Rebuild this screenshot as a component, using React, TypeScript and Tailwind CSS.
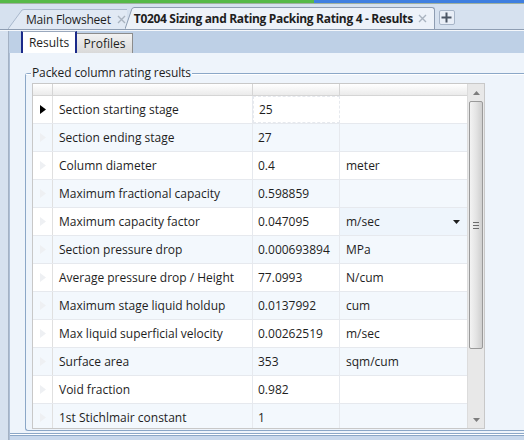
import React from "react";

const rows: [string, string, string, boolean?][] = [
  ["Section starting stage", "25", ""],
  ["Section ending stage", "27", ""],
  ["Column diameter", "0.4", "meter"],
  ["Maximum fractional capacity", "0.598859", ""],
  ["Maximum capacity factor", "0.047095", "m/sec", true],
  ["Section pressure drop", "0.000693894", "MPa"],
  ["Average pressure drop / Height", "77.0993", "N/cum"],
  ["Maximum stage liquid holdup", "0.0137992", "cum"],
  ["Max liquid superficial velocity", "0.00262519", "m/sec"],
  ["Surface area", "353", "sqm/cum"],
  ["Void fraction", "0.982", ""],
  ["1st Stichlmair constant", "1", ""],
];

function CloseX() {
  return (
    <svg width="9" height="9" viewBox="0 0 9 9" className="shrink-0">
      <path d="M1 1 L8 8 M8 1 L1 8" stroke="#a9b3bf" strokeWidth="1.4" />
    </svg>
  );
}

export default function App() {
  return (
    <div
      className="w-[524px] h-[440px] overflow-hidden bg-[#d6e1ef] relative text-[12px] text-[#1e1e1e] flex flex-col"
      style={{ fontFamily: "'Open Sans', 'Noto Sans', sans-serif" }}
    >
      {/* top color bar */}
      <div className="flex h-[3px] shrink-0">
        <div className="w-[314px] bg-[#56b948]" />
        <div className="flex-1 bg-[#3f7fe0]" />
      </div>
      <div className="h-[1px] bg-[#9fb0a0] shrink-0" />
      {/* document tabs */}
      <div className="h-[25px] flex items-end shrink-0 pl-[8px] relative">
        <div className="flex items-end h-[20px]">
          <svg width="16" height="20" viewBox="0 0 16 20" className="shrink-0">
            <path d="M0 20 L14 1 L16 0.5 L16 20 Z" fill="#e1e9f4" />
            <path d="M0 20 L14 1 L16 0.5" stroke="#a9b8cc" fill="none" />
          </svg>
          <div className="h-[20px] bg-[#e1e9f4] border-t border-[#a9b8cc] flex items-center gap-[6px] pl-[2px] pr-[1px] text-[#1e1e1e] tracking-[-0.2px]">
            <span className="leading-none">Main Flowsheet</span>
            <CloseX />
          </div>
        </div>
        <div className="flex items-end h-[22px] -ml-[2px] relative">
          <svg width="9" height="22" viewBox="0 0 9 22" className="shrink-0">
            <path d="M0 22 L7 1.5 L9 0.5 L9 22 Z" fill="#edf2f9" />
            <path d="M0 22 L7 1.5 L9 0.5" stroke="#8e9db2" fill="none" />
          </svg>
          <div className="h-[22px] bg-[#edf2f9] border-t border-r border-[#8e9db2] rounded-tr-[3px] flex items-center gap-[5px] pl-[0px] pr-[7px]">
            <span className="font-bold leading-none tracking-[-0.32px]">
              T0204 Sizing and Rating Packing Rating 4 - Results
            </span>
            <CloseX />
          </div>
        </div>
        <div className="ml-[4px] mb-[4px] w-[16px] h-[15px] border border-[#a7b5c8] rounded-[2px] bg-[#e8eef7] flex items-center justify-center">
          <svg width="11" height="11" viewBox="0 0 11 11">
            <path d="M5.5 0.5 V10.5 M0.5 5.5 H10.5" stroke="#4a5564" strokeWidth="2" />
          </svg>
        </div>
      </div>
      <div className="h-[1px] bg-[#8e9db2] shrink-0" />
      <div className="h-[1px] bg-[#f4f7fb] shrink-0" />
      {/* body */}
      <div className="flex-1 flex min-h-0">
        <div className="w-[9px] shrink-0 bg-[#d6e1ef] border-r border-[#a3b1c4]" />
        <div className="flex-1 flex flex-col bg-[#bed0e6] min-w-0">
          {/* inner tabs */}
          <div className="h-[22px] flex items-end pl-[12px] shrink-0">
            <div className="h-[22px] w-[56px] bg-white border-l-2 border-r-2 border-t border-l-[#1b2a8a] border-r-[#1b2a8a] border-t-[#9aa8bd] flex items-center justify-center leading-none">
              Results
            </div>
            <div className="h-[20px] w-[56px] bg-gradient-to-b from-[#f2f2f2] to-[#d9d9d9] border-t border-r border-[#8c8c8c] flex items-center justify-center leading-none">
              Profiles
            </div>
          </div>
          {/* panel */}
          <div className="flex-1 bg-[#eef4fb] border-l border-[#aebfd6] flex flex-col min-h-0 pt-[12px] pl-[15px]">
            {/* group box */}
            <div className="relative flex-1 flex flex-col min-h-0">
              <div className="absolute left-0 right-0 top-[8px] bottom-[2px] border-l border-t border-b border-[#8ba7c7] rounded-l-[3px]" />
              <div className="absolute left-[1px] right-0 top-[9px] h-[1px] bg-white" />
              <div className="relative ml-[6px] w-fit px-[1px] bg-[#eef4fb] leading-[16px] tracking-[-0.1px]">
                Packed column rating results
              </div>
              <div className="relative ml-[7px] mt-[2px] w-[453px] h-[346px] border border-[#c8c8c8] bg-white flex overflow-hidden">
                <div className="flex-1 flex flex-col min-w-0">
                  <div className="h-[12px] flex shrink-0 bg-gradient-to-b from-white to-[#ebebeb] border-b border-[#d5d5d5]">
                    <div className="w-[20px] border-r border-[#d5d5d5]" />
                    <div className="w-[200px] border-r border-[#d5d5d5]" />
                    <div className="w-[87px] border-r border-[#d5d5d5]" />
                    <div className="flex-1" />
                  </div>
                  {rows.map(([name, val, unit, dd], i) => {
                    const alt = i % 2 === 1;
                    const bg = alt ? "bg-[#f3f8fd]" : "bg-white";
                    return (
                      <div key={i} className={`h-[28px] flex shrink-0 border-b border-[#e6e9ee] ${bg}`}>
                        <div className="w-[20px] border-r border-[#e0e0e0] flex items-center justify-center">
                          {i === 0 ? (
                            <svg width="6" height="9" viewBox="0 0 6 9">
                              <path d="M0 0 L6 4.5 L0 9 Z" fill="#000" />
                            </svg>
                          ) : (
                            <svg width="6" height="9" viewBox="0 0 6 9">
                              <path d="M0 0 L6 4.5 L0 9 Z" fill="#eef0f3" />
                            </svg>
                          )}
                        </div>
                        <div className="w-[200px] border-r border-[#e6e9ee] flex items-center pl-[6px] whitespace-nowrap">
                          {name}
                        </div>
                        <div
                          className={`w-[87px] border-r border-[#e6e9ee] flex items-center pl-[5px] whitespace-nowrap ${
                            i === 0 ? "border border-dashed border-[#6e6e6e]" : ""
                          }`}
                        >
                          {val}
                        </div>
                        <div
                          className={`flex-1 flex items-center pl-[6px] pr-[7px] justify-between whitespace-nowrap ${
                            dd ? "bg-[#eef5fc]" : ""
                          }`}
                        >
                          <span>{unit}</span>
                          {dd && (
                            <svg width="7" height="4" viewBox="0 0 7 4">
                              <path d="M0 0 H7 L3.5 4 Z" fill="#1e1e1e" />
                            </svg>
                          )}
                        </div>
                      </div>
                    );
                  })}
                </div>
                {/* scrollbar */}
                <div className="w-[17px] shrink-0 bg-[#e8e8e8] border-l border-[#dcdcdc] flex flex-col items-center">
                  <div className="h-[17px] flex items-center justify-center">
                    <svg width="7" height="4" viewBox="0 0 7 4">
                      <path d="M0 4 H7 L3.5 0 Z" fill="#7d7d7d" />
                    </svg>
                  </div>
                  <div className="w-[14px] h-[248px] rounded-[2px] border border-[#9a9a9a] bg-gradient-to-r from-[#f3f3f3] via-[#e4e4e4] to-[#cfcfcf] flex items-center justify-center">
                    <svg width="6" height="7" viewBox="0 0 6 7">
                      <path d="M0 0.5 H6 M0 3.5 H6 M0 6.5 H6" stroke="#6b6b6b" />
                    </svg>
                  </div>
                  <div className="flex-1" />
                  <div className="h-[17px] flex items-center justify-center">
                    <svg width="7" height="4" viewBox="0 0 7 4">
                      <path d="M0 0 H7 L3.5 4 Z" fill="#7d7d7d" />
                    </svg>
                  </div>
                </div>
              </div>
            </div>
            <div className="h-[1px] bg-[#8ba7c7] -ml-[15px] shrink-0" />
            <div className="h-[1px] bg-white -ml-[15px] shrink-0" />
            <div className="h-[1px] bg-[#8ba7c7] -ml-[15px] shrink-0" />
            <div className="h-[4px] bg-[#c8d8ec] -ml-[15px] shrink-0" />
          </div>
        </div>
      </div>
    </div>
  );
}
